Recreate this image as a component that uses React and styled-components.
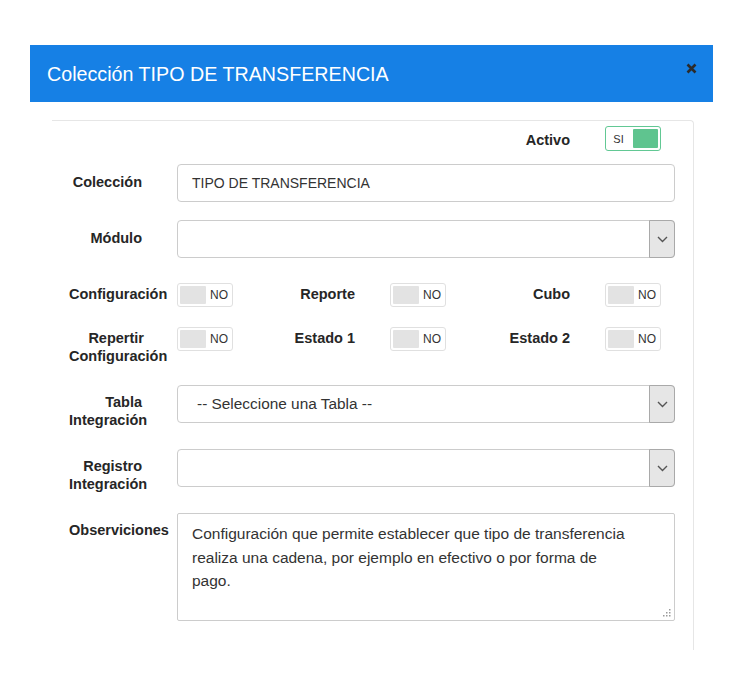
import React from "react";
import styled, { createGlobalStyle } from "styled-components";

const GlobalStyle = createGlobalStyle`
  html, body {
    margin: 0;
    padding: 0;
    background: #fff;
    font-family: "Liberation Sans", Arial, sans-serif;
    color: #333;
  }
`;

const Page = styled.div`
  width: 751px;
  height: 682px;
  padding: 45px 0 0 30px;
  box-sizing: border-box;
`;

const Modal = styled.div`
  width: 683px;
  background: #fff;
`;

const Header = styled.div`
  height: 57px;
  background: #1680e5;
  display: flex;
  align-items: center;
  justify-content: space-between;
  padding: 0 16px 0 17px;
  box-sizing: border-box;
`;

const Title = styled.h4`
  margin: 0;
  font-size: 19.7px;
  font-weight: 400;
  color: #fff;
  padding-top: 2px;
`;

const Close = styled.button`
  border: none;
  background: transparent;
  padding: 0;
  margin-top: -10px;
  cursor: pointer;
  display: flex;
`;

const Body = styled.div`
  padding: 18px 19px 0 22px;
`;

const Panel = styled.div`
  height: 530px;
  border-top: 1px solid #e6e6e6;
  border-right: 1px solid #e6e6e6;
  border-top-right-radius: 4px;
  padding: 5px 18px 0 17px;
  box-sizing: border-box;
  display: flex;
  flex-direction: column;
`;

const FieldRow = styled.div`
  display: grid;
  grid-template-columns: 108px 498px;
  margin-top: ${({ $mt }) => $mt}px;
`;

const SwitchRow = styled.div`
  display: grid;
  grid-template-columns: 108px 56px 157px 56px 159px 56px;
  align-items: start;
  margin-top: ${({ $mt }) => $mt || 0}px;
`;

const Label = styled.label`
  font-size: 14.5px;
  font-weight: 700;
  line-height: 18px;
  color: #262626;
  text-align: right;
  padding-right: ${({ $pr }) => $pr || 35}px;
  padding-top: ${({ $pt }) => ($pt === undefined ? 9 : $pt)}px;
`;

const Input = styled.div`
  height: 38px;
  box-sizing: border-box;
  border: 1px solid #ccc;
  border-radius: 4px;
  padding: 0 14px;
  display: flex;
  align-items: center;
  font-size: 14px;
  color: #333;
`;

const Select = styled.div`
  height: 38px;
  box-sizing: border-box;
  border: 1px solid #ccc;
  border-radius: 4px;
  display: flex;
  align-items: stretch;
  font-size: 15.4px;
  color: #333;
`;

const SelectText = styled.span`
  flex: 1;
  display: flex;
  align-items: center;
  padding-left: 19px;
`;

const Arrow = styled.span`
  width: 24px;
  margin: -1px -1px -1px 0;
  background: #e6e6e6;
  border: 1px solid #a9a9a9;
  border-radius: 0 4px 4px 0;
  display: flex;
  align-items: center;
  justify-content: center;
`;

const Switch = styled.div`
  width: 56px;
  height: ${({ $on }) => ($on ? 25 : 24)}px;
  box-sizing: border-box;
  border: 1px solid ${({ $on }) => ($on ? "#62c894" : "#e0e0e0")};
  border-radius: 3px;
  padding: 2px;
  display: flex;
  flex-direction: ${({ $on }) => ($on ? "row-reverse" : "row")};
  align-items: stretch;
  background: #fff;
`;

const Knob = styled.span`
  width: ${({ $on }) => ($on ? 25 : 26)}px;
  background: ${({ $on }) => ($on ? "#5fc48f" : "#e3e3e3")};
  border-radius: 1px;
`;

const SwitchText = styled.span`
  flex: 1;
  display: flex;
  align-items: center;
  justify-content: center;
  font-size: ${({ $on }) => ($on ? 11 : 12)}px;
  color: #333;
  padding-left: ${({ $on }) => ($on ? 0 : 2)}px;
  padding-right: ${({ $on }) => ($on ? 4 : 0)}px;
`;

const AreaWrap = styled.div`
  position: relative;
  height: 108px;
`;

const TextArea = styled.textarea`
  width: 100%;
  height: 108px;
  box-sizing: border-box;
  border: 1px solid #ccc;
  border-radius: 2px;
  padding: 8px 14px;
  font-family: "Liberation Sans", Arial, sans-serif;
  font-size: 15.5px;
  line-height: 23.5px;
  color: #333;
  resize: none;
  outline: none;
  display: block;
`;

const Grip = styled.svg`
  position: absolute;
  right: 4px;
  bottom: 4px;
`;

const Toggle = ({ on }) => (
  <Switch $on={on}>
    <Knob $on={on} />
    <SwitchText $on={on}>{on ? "SI" : "NO"}</SwitchText>
  </Switch>
);

const Chevron = () => (
  <svg width="11" height="7" viewBox="0 0 11 7">
    <path d="M1 1l4.5 4.5L10 1" fill="none" stroke="#555" strokeWidth="1.4" />
  </svg>
);

const descripcion =
  "Configuración que permite establecer que tipo de transferencia\nrealiza una cadena, por ejemplo en efectivo o por forma de\npago.";

export default function App() {
  return (
    <Page>
      <GlobalStyle />
      <Modal>
        <Header>
          <Title>Colección TIPO DE TRANSFERENCIA</Title>
          <Close aria-label="Cerrar">
            <svg width="11" height="11" viewBox="0 0 11 11">
              <path d="M1.5 1.5l8 8M9.5 1.5l-8 8" stroke="#2b2b2b" strokeWidth="2.6" />
            </svg>
          </Close>
        </Header>
        <Body>
          <Panel>
            <SwitchRow>
              <span />
              <span />
              <span />
              <span />
              <Label $pt={5}>Activo</Label>
              <Toggle on />
            </SwitchRow>

            <FieldRow $mt={13}>
              <Label>Colección</Label>
              <Input>TIPO DE TRANSFERENCIA</Input>
            </FieldRow>

            <FieldRow $mt={18}>
              <Label>Módulo</Label>
              <Select>
                <SelectText />
                <Arrow>
                  <Chevron />
                </Arrow>
              </Select>
            </FieldRow>

            <SwitchRow $mt={25}>
              <Label $pt={2} $pr={33}>Configuración</Label>
              <Toggle />
              <Label $pt={2}>Reporte</Label>
              <Toggle />
              <Label $pt={2}>Cubo</Label>
              <Toggle />
            </SwitchRow>

            <SwitchRow $mt={20}>
              <Label $pt={2} $pr={33}>Repertir Configuración</Label>
              <Toggle />
              <Label $pt={2}>Estado 1</Label>
              <Toggle />
              <Label $pt={2}>Estado 2</Label>
              <Toggle />
            </SwitchRow>

            <FieldRow $mt={20}>
              <Label $pt={8}>Tabla Integración</Label>
              <Select>
                <SelectText>-- Seleccione una Tabla --</SelectText>
                <Arrow>
                  <Chevron />
                </Arrow>
              </Select>
            </FieldRow>

            <FieldRow $mt={20}>
              <Label $pt={8}>Registro Integración</Label>
              <Select>
                <SelectText />
                <Arrow>
                  <Chevron />
                </Arrow>
              </Select>
            </FieldRow>

            <FieldRow $mt={20}>
              <Label $pr={30} $pt={8}>Observiciones</Label>
              <AreaWrap>
                <TextArea readOnly defaultValue={descripcion} />
                <Grip width="9" height="9" viewBox="0 0 9 9">
                  <g fill="#9a9a9a">
                    <rect x="7" y="1" width="1.5" height="1.5" />
                    <rect x="4" y="4" width="1.5" height="1.5" />
                    <rect x="7" y="4" width="1.5" height="1.5" />
                    <rect x="1" y="7" width="1.5" height="1.5" />
                    <rect x="4" y="7" width="1.5" height="1.5" />
                    <rect x="7" y="7" width="1.5" height="1.5" />
                  </g>
                </Grip>
              </AreaWrap>
            </FieldRow>
          </Panel>
        </Body>
      </Modal>
    </Page>
  );
}
